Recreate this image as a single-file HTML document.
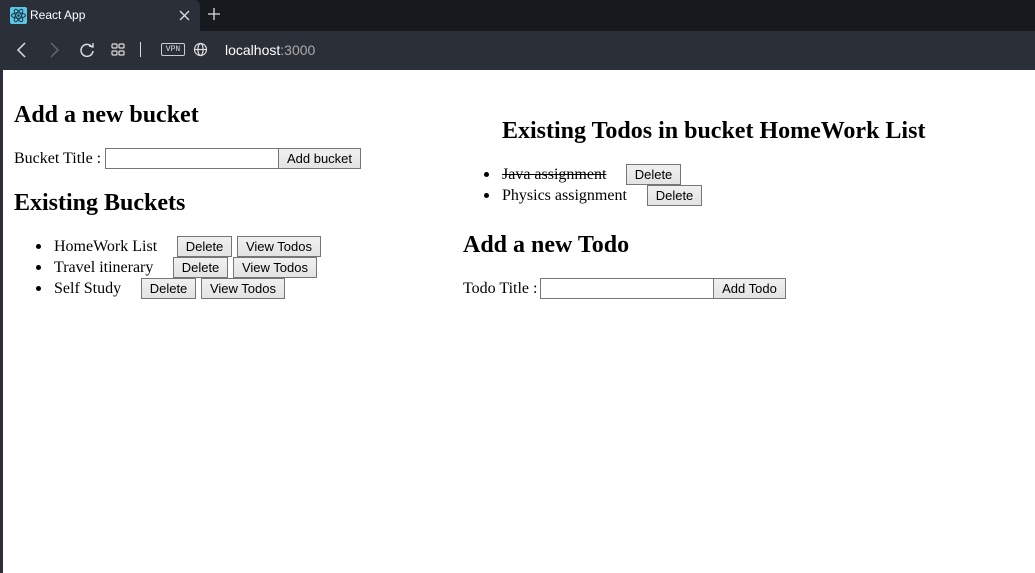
<!DOCTYPE html>
<html><head><meta charset="utf-8"><style>
*{margin:0;padding:0;box-sizing:border-box}
body{width:1035px;height:573px;overflow:hidden;background:#fff;position:relative;font-family:"Liberation Serif",serif;font-size:16px;color:#000}
.a{position:absolute;white-space:nowrap}
.h{font-weight:bold;font-size:24px;line-height:28px}
.t{line-height:20px}
.btn{position:absolute;height:21px;border:1px solid #767676;background:linear-gradient(#f0f0f0,#e3e3e3);font-family:"Liberation Sans",sans-serif;font-size:13px;line-height:19px;text-align:center;color:#000}
.inp{position:absolute;height:21px;border:1px solid #767676;background:#fff}
.dot{position:absolute;width:5px;height:5px;border-radius:50%;background:#000}
</style></head><body>
<div class="a" style="left:0;top:0;width:1035px;height:31px;background:#16191d"></div>
<div class="a" style="left:0;top:0;width:200px;height:31px;background:#2b3038;border-radius:0 6px 0 0"></div>
<div class="a" style="left:0;top:31px;width:1035px;height:39px;background:#2b3038"></div>
<div class="a" style="left:0;top:70px;width:3px;height:503px;background:#2b3038"></div>
<svg class="a" style="left:10px;top:7px" width="17" height="17" viewBox="0 0 17 17"><rect width="17" height="17" rx="2" fill="#5cc6e6"/><g fill="none" stroke="#1b3a4a" stroke-width="1"><ellipse cx="8.5" cy="8.5" rx="7" ry="2.7"/><ellipse cx="8.5" cy="8.5" rx="7" ry="2.7" transform="rotate(60 8.5 8.5)"/><ellipse cx="8.5" cy="8.5" rx="7" ry="2.7" transform="rotate(120 8.5 8.5)"/></g><circle cx="8.5" cy="8.5" r="1.3" fill="#1b3a4a"/></svg>
<div class="a" style="left:30px;top:7px;color:#fff;font-family:'Liberation Sans',sans-serif;font-size:12px;line-height:17px">React App</div>
<svg class="a" style="left:179px;top:10px" width="11" height="11"><path d="M1 1L10 10M10 1L1 10" stroke="#ddd" stroke-width="1.3"/></svg>
<svg class="a" style="left:208px;top:8px" width="12" height="12"><path d="M6 0V12M0 6H12" stroke="#ddd" stroke-width="1.3"/></svg>
<svg class="a" style="left:16px;top:42px" width="12" height="16"><path d="M9 1L2 8L9 15" fill="none" stroke="#ddd" stroke-width="1.5"/></svg>
<svg class="a" style="left:48px;top:42px" width="12" height="16"><path d="M3 1L10 8L3 15" fill="none" stroke="#666" stroke-width="1.5"/></svg>
<svg class="a" style="left:79px;top:42px" width="16" height="16"><path d="M13 5A6 6 0 1 0 14 9" fill="none" stroke="#ddd" stroke-width="1.5"/><path d="M10 4L14 5L14 1" fill="none" stroke="#ddd" stroke-width="1.4"/></svg>
<svg class="a" style="left:111px;top:43px" width="14" height="13"><g fill="none" stroke="#ddd" stroke-width="1.2"><rect x="1" y="1" width="5" height="4" rx="1"/><rect x="8" y="1" width="5" height="4" rx="1"/><rect x="1" y="8" width="5" height="4" rx="1"/><rect x="8" y="8" width="5" height="4" rx="1"/></g></svg>
<div class="a" style="left:140px;top:42px;width:1px;height:15px;background:#ddd"></div>
<div class="a" style="left:161px;top:43px;width:24px;height:13px;border:1px solid #ccc;border-radius:2px;color:#ddd;font-family:'Liberation Mono',monospace;font-size:8px;line-height:11px;text-align:center">VPN</div>
<svg class="a" style="left:193px;top:42px" width="15" height="15"><g fill="none" stroke="#ddd" stroke-width="1.2"><circle cx="7.5" cy="7.5" r="6"/><ellipse cx="7.5" cy="7.5" rx="2.6" ry="6"/><path d="M1.5 7.5H13.5"/></g></svg>
<div class="a" style="left:225px;top:41px;color:#fff;font-family:'Liberation Sans',sans-serif;font-size:14px;line-height:18px">localhost<span style="color:#aaa">:3000</span></div>

<div class="a h" style="left:14px;top:101px">Add a new bucket</div>
<div class="a t" style="left:14px;top:149px">Bucket Title :</div>
<div class="inp" style="left:105px;top:148px;width:174px"></div>
<div class="btn" style="left:278px;top:148px;width:83px">Add bucket</div>
<div class="a h" style="left:14px;top:189px">Existing Buckets</div>
<div class="dot" style="left:36px;top:244px"></div>
<div class="a t" style="left:54px;top:237px">HomeWork List</div>
<div class="btn" style="left:177px;top:236px;width:55px">Delete</div>
<div class="btn" style="left:237px;top:236px;width:84px">View Todos</div>
<div class="dot" style="left:36px;top:265px"></div>
<div class="a t" style="left:54px;top:258px">Travel itinerary</div>
<div class="btn" style="left:173px;top:257px;width:55px">Delete</div>
<div class="btn" style="left:233px;top:257px;width:84px">View Todos</div>
<div class="dot" style="left:36px;top:286px"></div>
<div class="a t" style="left:54px;top:279px">Self Study</div>
<div class="btn" style="left:141px;top:278px;width:55px">Delete</div>
<div class="btn" style="left:201px;top:278px;width:84px">View Todos</div>

<div class="a h" style="left:502px;top:117px">Existing Todos in bucket HomeWork List</div>
<div class="dot" style="left:484px;top:172px"></div>
<div class="a t" style="left:502px;top:165px;text-decoration:line-through">Java assignment</div>
<div class="btn" style="left:626px;top:164px;width:55px">Delete</div>
<div class="dot" style="left:484px;top:193px"></div>
<div class="a t" style="left:502px;top:186px">Physics assignment</div>
<div class="btn" style="left:647px;top:185px;width:55px">Delete</div>
<div class="a h" style="left:463px;top:231px">Add a new Todo</div>
<div class="a t" style="left:463px;top:279px">Todo Title :</div>
<div class="inp" style="left:540px;top:278px;width:174px"></div>
<div class="btn" style="left:713px;top:278px;width:73px">Add Todo</div>
</body></html>
